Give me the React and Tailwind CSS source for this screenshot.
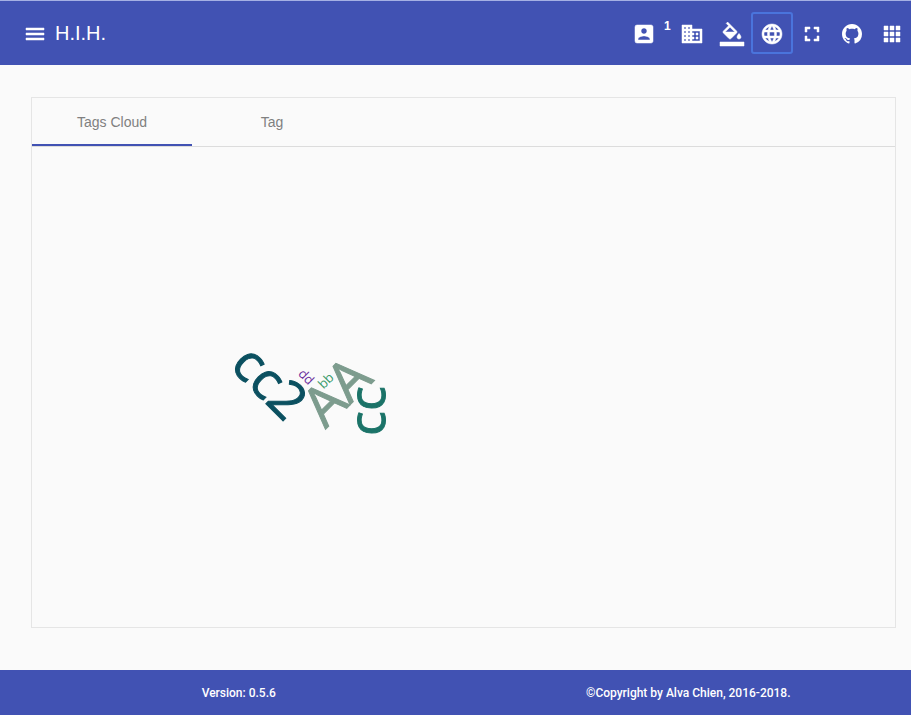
const words = [
  { text: 'cc2', x: 225, y: 248, angle: 45, size: 52, stroke: 1, color: '#0b5060' },
  { text: 'AA', x: 318, y: 258, angle: -45, size: 55, stroke: 1, color: '#7d9c8e' },
  { text: 'cc', x: 353, y: 264, angle: -90, size: 52, stroke: 1, color: '#1b7368' },
  { text: 'dd', x: 271, y: 233, angle: 45, size: 13, stroke: 0, color: '#6b2f9e' },
  { text: 'bb', x: 297, y: 237, angle: -45, size: 13, stroke: 0, color: '#3c9c6c' },
];

const icons = {
  menu: 'M3 18h18v-2H3v2zm0-5h18v-2H3v2zm0-7v2h18V6H3z',
  account:
    'M3 5v14a2 2 0 0 0 2 2h14c1.100 0 2-.9 2-2V5c0-1.100-.9-2-2-2H5a2 2 0 0 0-2 2zm12 4c0 1.660-1.340 3-3 3s-3-1.340-3-3 1.340-3 3-3 3 1.340 3 3zm-9 8c0-2 4-3.100 6-3.100s6 1.100 6 3.100v1H6v-1z',
  business:
    'M12 7V3H2v18h20V7H12zM6 19H4v-2h2v2zm0-4H4v-2h2v2zm0-4H4V9h2v2zm0-4H4V5h2v2zm4 12H8v-2h2v2zm0-4H8v-2h2v2zm0-4H8V9h2v2zm0-4H8V5h2v2zm10 12h-8v-2h2v-2h-2v-2h2v-2h-2V9h8v10zm-2-8h-2v2h2v-2zm0 4h-2v2h2v-2z',
  fill: 'M16.56 8.94L7.62 0 6.21 1.41l2.38 2.38-5.15 5.15c-.59.59-.59 1.54 0 2.12l5.5 5.5c.29.29.68.44 1.06.44s.77-.15 1.06-.44l5.5-5.5c.59-.58.59-1.53 0-2.12zM5.21 10L10 5.21 14.79 10H5.21zM19 11.5s-2 2.17-2 3.5c0 1.1.9 2 2 2s2-.9 2-2c0-1.33-2-3.5-2-3.5zM0 20h24v4H0z',
  language:
    'M11.99 2C6.47 2 2 6.48 2 12s4.47 10 9.99 10C17.52 22 22 17.52 22 12S17.52 2 11.99 2zm6.93 6h-2.95a15.65 15.65 0 0 0-1.38-3.56A8.03 8.03 0 0 1 18.92 8zM12 4.04c.83 1.2 1.48 2.53 1.91 3.96h-3.82c.43-1.43 1.08-2.76 1.91-3.96zM4.26 14C4.1 13.36 4 12.69 4 12s.1-1.36.26-2h3.38c-.08.66-.14 1.32-.14 2s.06 1.34.14 2H4.26zm.82 2h2.95c.32 1.25.78 2.45 1.38 3.56A7.987 7.987 0 0 1 5.08 16zm2.95-8H5.08a7.987 7.987 0 0 1 4.33-3.56A15.65 15.65 0 0 0 8.03 8zM12 19.96c-.83-1.2-1.48-2.53-1.91-3.96h3.82c-.43 1.43-1.08 2.76-1.91 3.96zM14.34 14H9.66c-.09-.66-.16-1.32-.16-2s.07-1.35.16-2h4.68c.09.65.16 1.32.16 2s-.07 1.34-.16 2zm.25 5.56c.6-1.11 1.06-2.31 1.38-3.56h2.95a8.03 8.03 0 0 1-4.33 3.56zM16.36 14c.08-.66.14-1.32.14-2s-.06-1.34-.14-2h3.38c.16.64.26 1.31.26 2s-.1 1.36-.26 2h-3.38z',
  fullscreen: 'M7 14H5v5h5v-2H7v-3zm-2-4h2V7h3V5H5v5zm12 7h-3v2h5v-5h-2v3zM14 5v2h3v3h2V5h-5z',
  apps: 'M4 8h4V4H4v4zm6 12h4v-4h-4v4zm-6 0h4v-4H4v4zm0-6h4v-4H4v4zm6 0h4v-4h-4v4zm6-10v4h4V4h-4zm-6 4h4V4h-4v4zm6 6h4v-4h-4v4zm0 6h4v-4h-4v4z',
};

function Icon({ name }) {
  return (
    <svg viewBox="0 0 24 24" className="size-6 overflow-visible" fill="currentColor" stroke="currentColor" strokeWidth="0.5" aria-hidden="true">
      <path d={icons[name]} />
    </svg>
  );
}

function GithubIcon() {
  return (
    <svg viewBox="0 0 16 16" className="size-5" fill="currentColor" aria-hidden="true">
      <path d="M8 0C3.58 0 0 3.58 0 8c0 3.54 2.29 6.53 5.47 7.59.4.07.55-.17.55-.38 0-.19-.01-.82-.01-1.49-2.01.37-2.53-.49-2.69-.94-.09-.23-.48-.94-.82-1.13-.28-.15-.68-.52-.01-.53.63-.01 1.08.58 1.23.82.72 1.21 1.87.87 2.33.66.07-.52.28-.87.51-1.07-1.78-.2-3.64-.89-3.64-3.95 0-.87.31-1.59.82-2.15-.08-.2-.36-1.02.08-2.12 0 0 .67-.21 2.2.82.64-.18 1.32-.27 2-.27s1.36.09 2 .27c1.53-1.04 2.2-.82 2.2-.82.44 1.1.16 1.92.08 2.12.51.56.82 1.27.82 2.15 0 3.07-1.87 3.75-3.65 3.95.29.25.54.73.54 1.48 0 1.07-.01 1.93-.01 2.2 0 .21.15.46.55.38A8.01 8.01 0 0 0 16 8c0-4.42-3.58-8-8-8z" />
    </svg>
  );
}

function IconButton({ label, outlined, children }) {
  return (
    <button
      type="button"
      aria-label={label}
      className={
        outlined
          ? 'flex size-10 items-center justify-center rounded-xs pt-0.5 outline-2 -outline-offset-1 outline-[#4a74dc]'
          : 'flex size-10 items-center justify-center pt-0.5'
      }
    >
      {children}
    </button>
  );
}

export default function App() {
  return (
    <div className="flex min-h-screen flex-col overflow-x-hidden bg-[#fafafa] font-['Liberation_Sans',Arial,sans-serif]">
      <header className="flex h-[65px] items-center justify-between border-t border-[#a5b0e4] bg-[#4152b3] pl-[23px] text-white">
        <div className="flex items-center gap-2">
          <button type="button" aria-label="Menu" className="pt-0.5">
            <Icon name="menu" />
          </button>
          <h1 className="text-xl">H.I.H.</h1>
        </div>
        <nav className="-mr-px flex items-center" aria-label="Tools">
          <IconButton label="Account"><Icon name="account" /></IconButton>
          <span className="w-2 pb-3.5 text-xs font-bold">1</span>
          <IconButton label="Home"><Icon name="business" /></IconButton>
          <IconButton label="Theme"><Icon name="fill" /></IconButton>
          <IconButton label="Language" outlined><Icon name="language" /></IconButton>
          <IconButton label="Full screen"><Icon name="fullscreen" /></IconButton>
          <IconButton label="GitHub"><GithubIcon /></IconButton>
          <IconButton label="Apps"><Icon name="apps" /></IconButton>
        </nav>
      </header>

      <main className="flex grow flex-col pt-8 pr-[15px] pb-[42px] pl-[31px]">
        <section className="flex grow flex-col border border-[#e5e5e5]">
          <div role="tablist" className="flex border-b border-[#dcdcdc] text-sm text-[#808080]">
            <button type="button" role="tab" aria-selected="true" className="h-12 w-40 border-b-2 border-[#4152b3] pt-0.5">
              Tags Cloud
            </button>
            <button type="button" role="tab" aria-selected="false" className="h-12 w-40 border-b-2 border-transparent pt-0.5">
              Tag
            </button>
          </div>
          <div role="tabpanel" className="grow">
            <svg className="h-[400px] w-full font-['Open_Sans','Noto_Sans',sans-serif]" role="img" aria-label="Tags cloud">
              {words.map((word) => (
                <text
                  key={word.text}
                  textAnchor="middle"
                  fontSize={word.size}
                  fill={word.color}
                  stroke={word.color}
                  strokeWidth={word.stroke}
                  transform={`translate(${word.x} ${word.y}) rotate(${word.angle})`}
                >
                  {word.text}
                </text>
              ))}
            </svg>
          </div>
        </section>
      </main>

      <footer className="grid h-[45px] grid-cols-2 items-center gap-1 bg-[#4152b3] pl-4 text-center font-[Roboto,'Liberation_Sans',sans-serif] text-xs font-medium text-white">
        <p>Version: 0.5.6</p>
        <p>©Copyright by Alva Chien, 2016-2018.</p>
      </footer>
    </div>
  );
}
